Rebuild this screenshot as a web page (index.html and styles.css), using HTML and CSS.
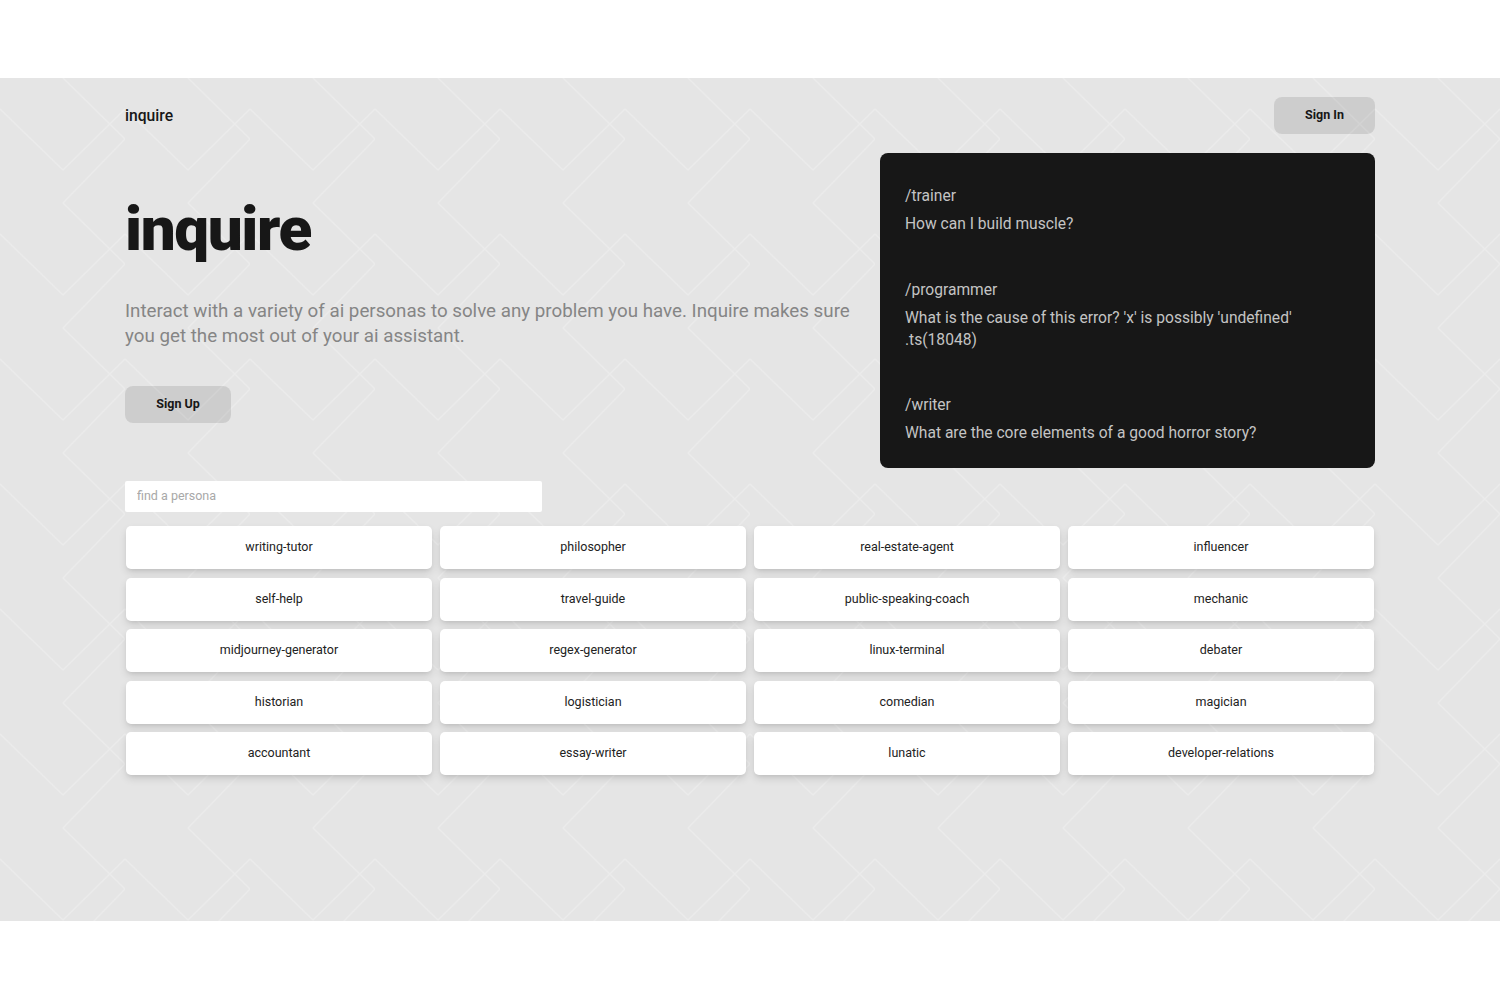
FILE: index.html
```html
<!doctype html>
<html lang="en">
    <head>
        <meta charset="UTF-8" />
        <meta name="viewport" content="width=device-width, initial-scale=1.0" />
        <title>inquire</title>
        <link rel="stylesheet" href="styles.css">
    </head>
    <body>
        <div class="page">
            <header class="topbar">
                <span class="logo">inquire</span>
                <button class="btn btn-signin">Sign In</button>
            </header>
            <section class="hero">
                <div class="hero-left">
                    <h1>inquire</h1>
                    <p class="lead">Interact with a variety of ai personas to solve any problem you have. Inquire makes sure you get the most out of your ai assistant.</p>
                    <button class="btn btn-signup">Sign Up</button>
                </div>
                <div class="examples">
                    <div class="example">
                        <div class="cmd">/trainer</div>
                        <div class="question">How can I build muscle?</div>
                    </div>
                    <div class="example">
                        <div class="cmd">/programmer</div>
                        <div class="question">What is the cause of this error? 'x' is possibly 'undefined' .ts(18048)</div>
                    </div>
                    <div class="example">
                        <div class="cmd">/writer</div>
                        <div class="question">What are the core elements of a good horror story?</div>
                    </div>
                </div>
            </section>
            <input class="search" type="text" placeholder="find a persona" />
            <div class="personas">
                <a class="persona">writing-tutor</a>
                <a class="persona">philosopher</a>
                <a class="persona">real-estate-agent</a>
                <a class="persona">influencer</a>
                <a class="persona">self-help</a>
                <a class="persona">travel-guide</a>
                <a class="persona">public-speaking-coach</a>
                <a class="persona">mechanic</a>
                <a class="persona">midjourney-generator</a>
                <a class="persona">regex-generator</a>
                <a class="persona">linux-terminal</a>
                <a class="persona">debater</a>
                <a class="persona">historian</a>
                <a class="persona">logistician</a>
                <a class="persona">comedian</a>
                <a class="persona">magician</a>
                <a class="persona">accountant</a>
                <a class="persona">essay-writer</a>
                <a class="persona">lunatic</a>
                <a class="persona">developer-relations</a>
            </div>
        </div>
    </body>
</html>
```

FILE: styles.css
```css
:root {
    --ink: #171717;
    --page-bg: #e5e5e5;
    --btn-bg: rgba(0, 0, 0, 0.1);
}
* {
    box-sizing: border-box;
}
body {
    margin: 0;
    background: white;
    color: var(--ink);
    font-family: Roboto, "Liberation Sans", sans-serif;
}
.page {
    margin: 78px 0 79px;
    height: 843px;
    padding: 19px 125px 0;
    background-color: var(--page-bg);
    background-image: url("data:image/svg+xml,%3Csvg xmlns='http://www.w3.org/2000/svg' width='125' height='125'%3E%3Cpath d='M0 31L63 92L125 31M63 0L125 61L63 125' fill='none' stroke='%23ebebeb' stroke-width='1.4' stroke-linejoin='round'/%3E%3C/svg%3E");
}
.topbar {
    display: flex;
    justify-content: space-between;
    align-items: center;
    height: 37px;
}
.logo {
    font-size: 15.7px;
    font-weight: 500;
}
.btn {
    height: 37px;
    border: none;
    border-radius: 8px;
    background: var(--btn-bg);
    color: var(--ink);
    font-family: inherit;
    font-size: 12.5px;
    font-weight: 700;
    padding: 0 0 2px;
}
.btn-signin {
    width: 101px;
}
.btn-signup {
    width: 106px;
    margin-top: 37px;
}
.hero {
    display: flex;
    justify-content: space-between;
    margin-top: 19px;
}
.hero-left {
    width: 730px;
}
h1 {
    margin: 36px 0 0;
    font-size: 62px;
    line-height: 80px;
    font-weight: 900;
    letter-spacing: -1.4px;
}
.lead {
    margin: 30px 0 0;
    font-size: 18.75px;
    line-height: 25px;
    color: #858585;
}
.examples {
    width: 495px;
    height: 315px;
    padding: 32px 25px 0;
    border-radius: 8px;
    background: var(--ink);
    color: #c4c4c4;
    font-size: 15.6px;
}
.example {
    margin-bottom: 43.5px;
}
.cmd {
    line-height: 22px;
    margin-bottom: 6px;
}
.question {
    line-height: 22px;
    width: 400px;
}
.search {
    display: block;
    width: 417px;
    height: 31px;
    margin-top: 13px;
    padding: 0 12px 2px;
    border: none;
    border-radius: 2px;
    background: white;
    font-family: inherit;
    font-size: 12.5px;
}
.search::placeholder {
    color: #a8a8a8;
}
.personas {
    display: grid;
    grid-template-columns: repeat(4, 1fr);
    gap: 8.5px 8px;
    margin-top: 14px;
    padding: 0 1px;
}
.persona {
    display: flex;
    justify-content: center;
    align-items: center;
    height: 43px;
    padding-bottom: 2px;
    border-radius: 5px;
    background: white;
    box-shadow: 0 4px 8px -1px rgba(0, 0, 0, 0.14), 0 2px 4px -2px rgba(0, 0, 0, 0.1);
    font-size: 12.5px;
    color: #222;
}
```
